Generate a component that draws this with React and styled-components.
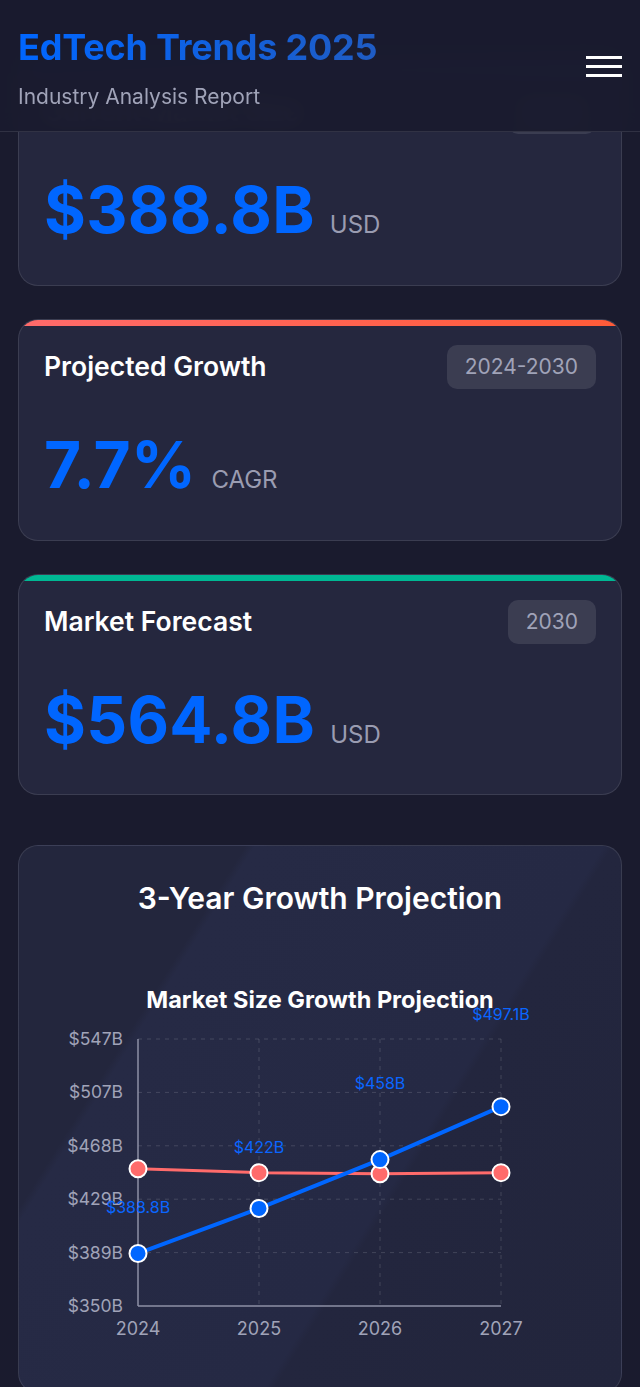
import React from "react";
import styled, { createGlobalStyle } from "styled-components";

const GlobalStyle = createGlobalStyle`
  * {
    box-sizing: border-box;
  }
  body {
    margin: 0;
    background: #1a1b2e;
    font-family: Inter, "Noto Sans", sans-serif;
    color: #ffffff;
  }
`;

const Header = styled.header`
  position: fixed;
  top: 0;
  left: 0;
  right: 0;
  z-index: 10;
  height: 132px;
  padding: 27px 18px 20px;
  display: flex;
  align-items: center;
  justify-content: space-between;
  background: rgba(26, 27, 46, 0.97);
  backdrop-filter: blur(10px);
  border-bottom: 1px solid rgba(255, 255, 255, 0.1);
`;

const Brand = styled.div`
  display: flex;
  flex-direction: column;
`;

const Title = styled.h1`
  margin: 0;
  font-size: 36px;
  line-height: 1.2;
  font-weight: 700;
  letter-spacing: -0.2px;
  background: linear-gradient(90deg, #0066ff 0%, #1f5cc4 100%);
  -webkit-background-clip: text;
  background-clip: text;
  color: transparent;
  width: fit-content;
`;

const Subtitle = styled.p`
  margin: 12px 0 0;
  font-size: 21px;
  line-height: 1.5;
  color: #a0a3b8;
`;

const Burger = styled.button`
  display: flex;
  flex-direction: column;
  gap: 6px;
  padding: 0;
  margin-top: -6px;
  background: none;
  border: none;

  span {
    display: block;
    width: 36px;
    height: 3px;
    background: #ffffff;
  }
`;

const Main = styled.main`
  padding: 64px 18px 0;
`;

const Cards = styled.div`
  display: flex;
  flex-direction: column;
  gap: 33px;
`;

const Card = styled.div`
  position: relative;
  overflow: hidden;
  background: #25273e;
  border: 1px solid rgba(255, 255, 255, 0.1);
  border-radius: 20px;
  padding: 25px;

  &::before {
    content: "";
    position: absolute;
    top: 0;
    left: 0;
    right: 0;
    height: 6px;
    background: ${(p) => p.$accent};
  }
`;

const CardHead = styled.div`
  display: flex;
  align-items: center;
  justify-content: space-between;
`;

const CardTitle = styled.h3`
  margin: 0;
  font-size: 26.5px;
  line-height: 1.2;
  font-weight: 600;
  color: #ffffff;
`;

const Badge = styled.span`
  height: 44px;
  line-height: 44px;
  padding: 0 18px;
  border-radius: 10px;
  background: rgba(255, 255, 255, 0.1);
  color: #a0a3b8;
  font-size: 21px;
`;

const ValueRow = styled.div`
  display: flex;
  align-items: baseline;
  gap: 15px;
  margin: 38px 0 11px;
`;

const Value = styled.span`
  font-size: 64px;
  line-height: 1.2;
  font-weight: 700;
  color: #0066ff;
  letter-spacing: 0.3px;
`;

const Unit = styled.span`
  font-size: 24px;
  color: #9a9cb1;
`;

const ChartCard = styled.section`
  margin-top: 50px;
  border: 1px solid rgba(255, 255, 255, 0.1);
  border-radius: 20px;
  padding: 34px 25px 30px;
  background: linear-gradient(
    122deg,
    #23263d 0%,
    #23263d 24%,
    #262a45 25%,
    #252944 62%,
    #23263e 63%,
    #22253c 100%
  );
`;

const ChartTitle = styled.h2`
  margin: 0 0 26px;
  text-align: center;
  font-size: 30px;
  line-height: 1.2;
  font-weight: 600;
  color: #ffffff;
`;

const stats = [
  {
    title: "Current Market Size",
    badge: "2024",
    value: "$388.8B",
    unit: "USD",
    accent: "linear-gradient(90deg, #0066ff, #3d8bff)",
  },
  {
    title: "Projected Growth",
    badge: "2024-2030",
    value: "7.7%",
    unit: "CAGR",
    accent: "linear-gradient(90deg, #ff6b6b, #ff5b38)",
  },
  {
    title: "Market Forecast",
    badge: "2030",
    value: "$564.8B",
    unit: "USD",
    accent: "#00b894",
  },
];

// chart scale
const X0 = 94;
const XSTEP = 121;
const YTOP = 97;
const YBOT = 364;
const yOf = (v) => YBOT - ((v - 350) * (YBOT - YTOP)) / 197;

const years = [2024, 2025, 2026, 2027];
const market = [388.8, 422, 458, 497.1];
const marketLabels = ["$388.8B", "$422B", "$458B", "$497.1B"];
const baseline = [451.3, 448.4, 447.6, 448.4];
const yTicks = ["$547B", "$507B", "$468B", "$429B", "$389B", "$350B"];

const GrowthChart = () => {
  const xs = years.map((_, i) => X0 + i * XSTEP);
  const tickYs = yTicks.map((_, i) => YTOP + (i * (YBOT - YTOP)) / 5);
  const bluePts = market.map((v, i) => [xs[i], yOf(v)]);
  const redPts = baseline.map((v, i) => [xs[i], yOf(v)]);
  const line = (pts) => pts.map((p) => p.join(",")).join(" ");

  return (
    <svg width="552" height="420" viewBox="0 0 552 420" style={{ display: "block" }}>
      <text
        x="276"
        y="66"
        textAnchor="middle"
        fill="#ffffff"
        fontSize="23.5"
        fontWeight="700"
        fontFamily="Inter, sans-serif"
      >
        Market Size Growth Projection
      </text>

      {tickYs.map((y, i) => (
        <g key={yTicks[i]}>
          {i < 5 && (
            <line x1={X0} x2={xs[3]} y1={y} y2={y} stroke="rgba(255,255,255,0.14)" strokeDasharray="4 5" />
          )}
          <text
            x="79"
            y={y + 6}
            textAnchor="end"
            fill="#a0a3b8"
            fontSize="17.5"
            fontFamily="Inter, sans-serif"
          >
            {yTicks[i]}
          </text>
        </g>
      ))}

      {xs.map((x, i) => (
        <g key={years[i]}>
          {i > 0 && (
            <line x1={x} x2={x} y1={YTOP} y2={YBOT} stroke="rgba(255,255,255,0.14)" strokeDasharray="4 5" />
          )}
          <text
            x={x}
            y="393"
            textAnchor="middle"
            fill="#a0a3b8"
            fontSize="18"
            fontFamily="Inter, sans-serif"
          >
            {years[i]}
          </text>
        </g>
      ))}

      <line x1={X0} x2={X0} y1={YTOP} y2={YBOT} stroke="#8e91a6" strokeWidth="1.5" />
      <line x1={X0} x2={xs[3]} y1={YBOT} y2={YBOT} stroke="#8e91a6" strokeWidth="1.5" />

      <polyline points={line(redPts)} fill="none" stroke="#ff6b6b" strokeWidth="3" />
      <polyline points={line(bluePts)} fill="none" stroke="#0066ff" strokeWidth="4" />

      {redPts.map(([x, y], i) => (
        <circle key={"r" + i} cx={x} cy={y} r="8.5" fill="#ff6b6b" stroke="#ffffff" strokeWidth="2" />
      ))}
      {bluePts.map(([x, y], i) => (
        <circle key={"b" + i} cx={x} cy={y} r="8.5" fill="#0066ff" stroke="#ffffff" strokeWidth="2" />
      ))}

      {bluePts.map(([x, y], i) => (
        <text
          key={"l" + i}
          x={x}
          y={y - 45 - 15.5 * i + 5}
          textAnchor="middle"
          fill="#0a66ff"
          fontSize="16"
          fontFamily="Inter, sans-serif"
        >
          {marketLabels[i]}
        </text>
      ))}
    </svg>
  );
};

const App = () => {
  return (
    <>
      <GlobalStyle />
      <Header>
        <Brand>
          <Title>EdTech Trends 2025</Title>
          <Subtitle>Industry Analysis Report</Subtitle>
        </Brand>
        <Burger aria-label="Menu">
          <span />
          <span />
          <span />
        </Burger>
      </Header>

      <Main>
        <Cards>
          {stats.map((s) => (
            <Card key={s.title} $accent={s.accent}>
              <CardHead>
                <CardTitle>{s.title}</CardTitle>
                <Badge>{s.badge}</Badge>
              </CardHead>
              <ValueRow>
                <Value>{s.value}</Value>
                <Unit>{s.unit}</Unit>
              </ValueRow>
            </Card>
          ))}
        </Cards>

        <ChartCard>
          <ChartTitle>3-Year Growth Projection</ChartTitle>
          <GrowthChart />
        </ChartCard>
      </Main>
    </>
  );
};

export default App;
